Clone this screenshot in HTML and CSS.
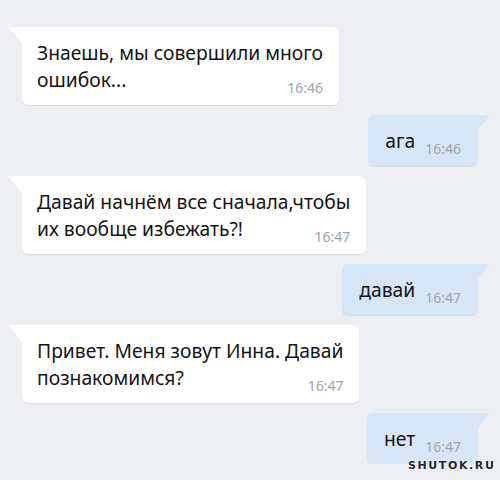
FILE: index.html
```html
<!DOCTYPE html>
<html lang="ru">
<head>
    <meta charset="UTF-8">
    <meta name="viewport" content="width=device-width, initial-scale=1.0">
    <title>Чат</title>
    <link rel="stylesheet" href="styles.css">
</head>
<body>
    <div class="chat">
        <div class="msg in">
            Знаешь, мы совершили много<br>ошибок...<span class="time">16:46</span>
        </div>
        <div class="msg out">
            ага<span class="time">16:46</span>
        </div>
        <div class="msg in">
            Давай начнём все сначала,чтобы<br>их вообще избежать?!<span class="time">16:47</span>
        </div>
        <div class="msg out">
            давай<span class="time">16:47</span>
        </div>
        <div class="msg in">
            Привет. Меня зовут Инна. Давай<br>познакомимся?<span class="time">16:47</span>
        </div>
        <div class="msg out">
            нет<span class="time">16:47</span>
        </div>
    </div>

    <div class="watermark">SHUTOK.RU</div>
</body>
</html>
```

FILE: styles.css
```css
body {
    margin: 0;
    background-color: #eceef2;
    font-family: "Noto Sans", "Open Sans", sans-serif;
    color: #141414;
}
.chat {
    display: flex;
    flex-direction: column;
    gap: 10px;
    padding: 27px 22px 0;
}
.msg {
    position: relative;
    padding: 12px 16px 8px 15px;
    font-size: 19.3px;
    line-height: 27px;
    border-radius: 6px;
    box-shadow: 0 1px 1px rgba(0,0,0,0.08);
    white-space: nowrap;
}
.msg.in {
    align-self: flex-start;
    background-color: #fff;
    border-top-left-radius: 0;
}
.msg.out {
    align-self: flex-end;
    background-color: #d7e6f7;
    border-top-right-radius: 0;
    padding-left: 17px;
    padding-right: 17px;
}
/* little tail at the top corner */
.msg.in::before {
    content: "";
    position: absolute;
    top: 0;
    left: -14px;
    border-top: 17px solid #fff;
    border-left: 14px solid transparent;
}
.msg.out::before {
    content: "";
    position: absolute;
    top: 0;
    right: -12px;
    border-top: 15px solid #d7e6f7;
    border-right: 12px solid transparent;
}
.time {
    float: right;
    margin: 13px 0 0 10px;
    font-size: 14px;
    line-height: 18px;
    color: #a0a4ab;
}
.watermark {
    position: absolute;
    left: 408px;
    top: 459px;
    font-family: "DejaVu Sans", sans-serif;
    font-weight: bold;
    font-size: 11px;
    letter-spacing: 1.6px;
    color: #1e2730;
    text-shadow: 0 0 2px #fff, 0 0 2px #fff;
}
```
